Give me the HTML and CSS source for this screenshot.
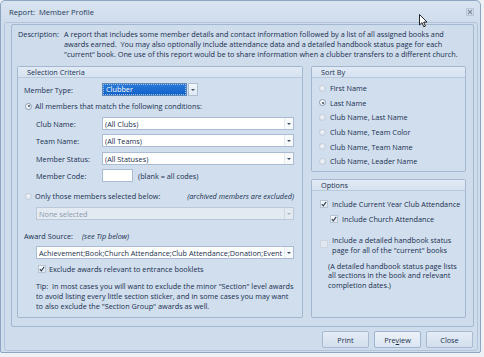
FILE: index.html
```html
<!DOCTYPE html>
<html lang="en">
<head>
    <meta charset="UTF-8">
    <title>Report: Member Profile</title>
    <link rel="stylesheet" href="styles.css">
</head>
<body>
    <div class="window">
        <div class="titlebar">
            <span class="title">Report:&nbsp; Member Profile</span>
            <svg class="close-icon" width="8" height="8" viewBox="0 0 8 8">
                <rect x="0.5" y="0.5" width="7" height="7" fill="none" stroke="#b9c5d4" stroke-width="1"/>
                <path d="M2 2 L6 6 M6 2 L2 6" stroke="#7f8b99" stroke-width="1.2"/>
            </svg>
        </div>

        <div class="client">
            <div class="panel">
                <div class="desc">
                    <span class="desc-label">Description:</span>
                    <p class="desc-text">A report that includes some member details and contact information followed by a list of all assigned books and<br>awards earned.&nbsp; You may also optionally include attendance data and a detailed handbook status page for each<br>"current" book. One use of this report would be to share information when a clubber transfers to a different church.</p>
                </div>

                <div class="columns">
                    <div class="group criteria">
                        <div class="group-head">Selection Criteria</div>

                        <div class="row type-row">
                            <span class="label type-label">Member Type:</span>
                            <div class="type-select"><span>Clubber</span></div>
                            <div class="type-btn"><i class="tri"></i></div>
                        </div>

                        <div class="row radio-row r1">
                            <span class="radio on"></span>
                            <span>All members that match the following conditions:</span>
                        </div>

                        <div class="row field-row club-row">
                            <span class="label field-label">Club Name:</span>
                            <div class="combo"><span>(All Clubs)</span><b class="drop"><i class="tri"></i></b></div>
                        </div>
                        <div class="row field-row team-row">
                            <span class="label field-label">Team Name:</span>
                            <div class="combo"><span>(All Teams)</span><b class="drop"><i class="tri"></i></b></div>
                        </div>
                        <div class="row field-row status-row">
                            <span class="label field-label">Member Status:</span>
                            <div class="combo"><span>(All Statuses)</span><b class="drop"><i class="tri"></i></b></div>
                        </div>
                        <div class="row field-row code-row">
                            <span class="label field-label">Member Code:</span>
                            <div class="code-box"></div>
                            <span class="code-hint">(blank = all codes)</span>
                        </div>

                        <div class="row radio-row r2">
                            <span class="radio"></span>
                            <span>Only those members selected below:</span>
                            <em class="archived">(archived members are excluded)</em>
                        </div>

                        <div class="row wide-row none-row">
                            <div class="combo disabled"><span>None selected</span><b class="drop"><i class="tri"></i></b></div>
                        </div>

                        <div class="row award-label-row">
                            <span>Award Source:</span>
                            <em class="see-tip">(see Tip below)</em>
                        </div>

                        <div class="row wide-row award-row">
                            <div class="combo"><span>Achievement;Book;Church Attendance;Club Attendance;Donation;Event</span><b class="drop"><i class="tri"></i></b></div>
                        </div>

                        <div class="row check-row exclude-row">
                            <span class="check on"><svg width="6" height="6" viewBox="0 0 6 6"><path d="M0.8 3.2 L2.3 4.8 L5.2 0.9" fill="none" stroke="#2c3e55" stroke-width="1.1"/></svg></span>
                            <span>Exclude awards relevant to entrance booklets</span>
                        </div>

                        <p class="tip">Tip:&nbsp; In most cases you will want to exclude the minor "Section" level awards<br>to avoid listing every little section sticker, and in some cases you may want<br>to also exclude the "Section Group" awards as well.</p>
                    </div>

                    <div class="side">
                        <div class="group sort">
                            <div class="group-head">Sort By</div>
                            <div class="sort-list">
                                <div class="sort-item"><span class="radio"></span>First Name</div>
                                <div class="sort-item"><span class="radio on"></span>Last Name</div>
                                <div class="sort-item"><span class="radio"></span>Club Name, Last Name</div>
                                <div class="sort-item"><span class="radio"></span>Club Name, Team Color</div>
                                <div class="sort-item"><span class="radio"></span>Club Name, Team Name</div>
                                <div class="sort-item"><span class="radio"></span>Club Name, Leader Name</div>
                            </div>
                        </div>

                        <div class="group options">
                            <div class="group-head">Options</div>
                            <div class="opt opt1">
                                <span class="check on"><svg width="6" height="6" viewBox="0 0 6 6"><path d="M0.8 3.2 L2.3 4.8 L5.2 0.9" fill="none" stroke="#2c3e55" stroke-width="1.1"/></svg></span>
                                <span>Include Current Year Club Attendance</span>
                            </div>
                            <div class="opt opt2">
                                <span class="check on"><svg width="6" height="6" viewBox="0 0 6 6"><path d="M0.8 3.2 L2.3 4.8 L5.2 0.9" fill="none" stroke="#2c3e55" stroke-width="1.1"/></svg></span>
                                <span>Include Church Attendance</span>
                            </div>
                            <div class="opt opt3">
                                <span class="check faint"></span>
                                <span>Include a detailed handbook status<br>page for all of the "current" books</span>
                            </div>
                            <p class="opt-note">(A detailed handbook status page lists<br>all sections in the book and relevant<br>completion dates.)</p>
                        </div>
                    </div>
                </div>
            </div>

            <div class="buttons">
                <button class="btn">Print</button>
                <button class="btn focus">Pre<u>v</u>iew</button>
                <button class="btn">Close</button>
            </div>
        </div>

        <svg class="cursor" width="9" height="14" viewBox="0 0 9 14">
            <path d="M0.5 0.5 L0.5 11 L3 8.6 L4.8 12.8 L6.4 12.1 L4.7 8.1 L8 8.1 Z" fill="#fff" stroke="#111" stroke-width="0.9" stroke-linejoin="round"/>
        </svg>
    </div>
</body>
</html>
```

FILE: styles.css
```css
:root {
    --bg: #cfdcec;
    --line: #a3b7d0;
    --text: #172f4f;
    --head: #dbe5f2;
}

* {
    box-sizing: border-box;
}

body {
    margin: 0;
    background: #eef1f5;
    font-family: 'Open Sans', 'Liberation Sans', sans-serif;
    font-size: 7.3px;
    color: var(--text);
}

p {
    margin: 0;
}

.window {
    position: relative;
    width: 481px;
    height: 353px;
    background: var(--bg);
    border: 1px solid #8fa5c1;
    border-radius: 5px 5px 2px 2px;
}

.titlebar {
    height: 21px;
    display: flex;
    align-items: center;
    justify-content: space-between;
    padding: 0 6px 0 8px;
    background: linear-gradient(#d9e4f1, #cfdcec);
    border-radius: 5px 5px 0 0;
}

.title {
    font-size: 7.6px;
    color: #233b5a;
}

.client {
    margin-left: 3px;
    width: 474px;
    height: 329px;
    border: 1px solid #b3c4da;
    border-radius: 3px;
    padding: 1px 0 0 6px;
}

.panel {
    width: 463px;
    height: 303px;
    border: 1px solid var(--line);
    border-radius: 2px;
    padding-top: 4px;
}

.desc {
    display: flex;
    padding-left: 6px;
    line-height: 10px;
    white-space: nowrap;
}

.desc-label {
    width: 46px;
}

.columns {
    display: flex;
    gap: 8px;
    margin-top: 7px;
    padding-left: 5px;
}

.group {
    border: 1px solid var(--line);
    border-radius: 2px;
    background: #d1deee;
}

.group-head {
    height: 11px;
    line-height: 10px;
    padding-left: 9px;
    background: linear-gradient(#e1eaf5, #d6e2f0);
    border-bottom: 1px solid #b9c9dd;
}

.criteria {
    width: 286px;
    height: 252px;
    white-space: nowrap;
}

.row {
    display: flex;
    align-items: center;
}

.label {
    display: inline-block;
}

.type-row {
    margin-top: 5px;
    height: 13px;
    padding-left: 6px;
}

.type-label {
    width: 78px;
}

.type-select {
    width: 85px;
    height: 13px;
    background: linear-gradient(#2a79da, #0f61c8);
    border: 1px solid #5f86b8;
    padding: 1px;
}

.type-select span {
    display: block;
    height: 9px;
    line-height: 9px;
    padding-left: 2px;
    color: #fff;
    outline: 1px dotted #9fc3ee;
}

.type-btn {
    width: 10px;
    height: 13px;
    margin-left: 1px;
    border: 1px solid #aebfd4;
    background: linear-gradient(#f4f7fb, #dfe7f1);
    display: flex;
    align-items: center;
    justify-content: center;
}

.tri {
    display: block;
    width: 0;
    height: 0;
    border-left: 2px solid transparent;
    border-right: 2px solid transparent;
    border-top: 2px solid #3d4f66;
}

.radio-row {
    height: 10px;
    padding-left: 7px;
    gap: 3px;
}

.r1 {
    margin-top: 5px;
}

.r2 {
    margin-top: 9px;
}

.radio {
    display: inline-block;
    width: 7px;
    height: 7px;
    border-radius: 50%;
    border: 1px solid #c3ccd8;
    background: radial-gradient(circle at 40% 35%, #f3f5f8, #d6dde6);
    position: relative;
    flex: none;
}

.radio.on {
    border-color: #8e9db0;
    background: radial-gradient(circle at 40% 35%, #ffffff, #e1e7ee);
}

.radio.on::after {
    content: "";
    position: absolute;
    left: 1.5px;
    top: 1.5px;
    width: 2px;
    height: 2px;
    border-radius: 50%;
    background: #3a4a5e;
}

.archived {
    margin-left: auto;
    margin-right: 8px;
}

.field-row {
    height: 13px;
    padding-left: 18px;
}

.club-row {
    margin-top: 6px;
}

.team-row {
    margin-top: 4px;
}

.status-row {
    margin-top: 5px;
}

.code-row {
    margin-top: 4px;
}

.field-label {
    width: 66px;
}

.combo {
    display: flex;
    align-items: center;
    width: 192px;
    height: 13px;
    background: #fff;
    border: 1px solid #aabcd3;
    padding-left: 2px;
}

.combo span {
    flex: 1;
    overflow: hidden;
}

.drop {
    width: 9px;
    height: 11px;
    border-left: 1px solid #e3e9f1;
    display: flex;
    align-items: center;
    justify-content: center;
    background: #f7f9fc;
}

.code-box {
    width: 31px;
    height: 13px;
    background: #fff;
    border: 1px solid #aabcd3;
}

.code-hint {
    margin-left: 5px;
}

.wide-row {
    height: 13px;
    padding-left: 18px;
}

.wide-row .combo {
    width: 258px;
}

.none-row {
    margin-top: 6px;
}

.combo.disabled {
    background: #e4eaf2;
    border-color: #bac8d9;
    color: #8b99ac;
}

.combo.disabled .drop {
    background: #e4eaf2;
    border-left-color: #d0d9e5;
}

.combo.disabled .tri {
    border-top-color: #a9b5c4;
}

.award-label-row {
    margin-top: 11px;
    height: 10px;
    padding-left: 6px;
}

.see-tip {
    margin-left: 9px;
}

.award-row {
    margin-top: 5px;
}

.check-row {
    margin-top: 5px;
    height: 10px;
    padding-left: 20px;
    gap: 3px;
}

.check {
    display: inline-flex;
    align-items: center;
    justify-content: center;
    width: 8px;
    height: 8px;
    border: 1px solid #b7c4d4;
    background: linear-gradient(#f6f8fb, #e2e8f0);
    flex: none;
}

.check.faint {
    border-color: #ccd5e0;
    background: #dfe6ef;
}

.tip {
    margin-top: 7px;
    padding-left: 18px;
    line-height: 10px;
}

.side {
    display: flex;
    flex-direction: column;
    gap: 7px;
    width: 155px;
}

.sort {
    height: 106px;
}

.sort-list {
    padding-top: 3px;
}

.sort-item {
    display: flex;
    align-items: center;
    gap: 4px;
    height: 14.6px;
    padding-left: 7px;
}

.options {
    height: 139px;
    white-space: nowrap;
}

.opt {
    display: flex;
    gap: 4px;
    padding-left: 8px;
    line-height: 10px;
}

.opt .check {
    margin-top: 1px;
}

.opt1 {
    margin-top: 8px;
}

.opt2 {
    margin-top: 5px;
    padding-left: 18px;
}

.opt3 {
    margin-top: 11px;
}

.opt3 .check {
    margin-top: 5px;
}

.opt-note {
    margin-top: 7px;
    padding-left: 16px;
    line-height: 9.4px;
}

.buttons {
    display: flex;
    justify-content: flex-end;
    gap: 5px;
    margin-top: 4px;
    padding-right: 4px;
}

.btn {
    width: 47px;
    height: 17px;
    padding: 0;
    font: inherit;
    color: var(--text);
    border: 1px solid #a7bad2;
    border-radius: 2px;
    background: linear-gradient(#e4ecf6, #d3dfee);
}

.btn.focus {
    background: linear-gradient(#edf2f9, #dbe5f2);
    border-color: #9fb4cf;
}

.close-icon {
    display: block;
}

.cursor {
    position: absolute;
    left: 418px;
    top: 13px;
}
```
